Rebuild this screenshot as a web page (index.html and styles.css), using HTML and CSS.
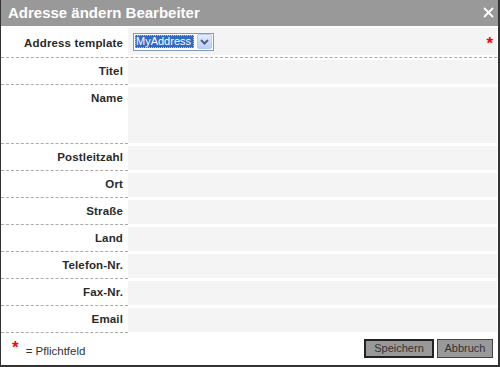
FILE: index.html
```html
<!DOCTYPE html>
<html lang="de">
<head>
  <meta charset="UTF-8">
  <title>Adresse ändern Bearbeiter</title>
  <link rel="stylesheet" href="styles.css">
</head>
<body>

  <div class="dialog">
    <!-- TITEL -->
    <div class="titlebar">
      <span class="title">Adresse ändern Bearbeiter</span>
      <span class="close">
        <svg width="11" height="11" viewBox="0 0 11 11"><path d="M1 1L10 10M10 1L1 10" stroke="#fff" stroke-width="1.8"/></svg>
      </span>
    </div>

    <!-- FORMULAR -->
    <div class="form">
      <div class="row row-first">
        <div class="row-label">Address template</div>
        <div class="row-value">
          <span class="select">
            <span class="select-text">MyAddress</span>
            <span class="select-btn">
              <svg width="9" height="6" viewBox="0 0 9 6"><path d="M1 1L4.5 4.5L8 1" fill="none" stroke="#4d6185" stroke-width="2"/></svg>
            </span>
          </span>
          <span class="req">*</span>
        </div>
      </div>
      <div class="row">
        <div class="row-label">Titel</div>
        <div class="row-value"></div>
      </div>
      <div class="row row-tall">
        <div class="row-label">Name</div>
        <div class="row-value"></div>
      </div>
      <div class="row">
        <div class="row-label">Postleitzahl</div>
        <div class="row-value"></div>
      </div>
      <div class="row">
        <div class="row-label">Ort</div>
        <div class="row-value"></div>
      </div>
      <div class="row">
        <div class="row-label">Straße</div>
        <div class="row-value"></div>
      </div>
      <div class="row">
        <div class="row-label">Land</div>
        <div class="row-value"></div>
      </div>
      <div class="row">
        <div class="row-label">Telefon-Nr.</div>
        <div class="row-value"></div>
      </div>
      <div class="row">
        <div class="row-label">Fax-Nr.</div>
        <div class="row-value"></div>
      </div>
      <div class="row">
        <div class="row-label">Email</div>
        <div class="row-value"></div>
      </div>
    </div>

    <!-- FUSS -->
    <div class="footer">
      <div class="legend"><span class="req">*</span> = Pflichtfeld</div>
      <div class="buttons">
        <button class="btn btn-default">Speichern</button>
        <button class="btn">Abbruch</button>
      </div>
    </div>
  </div>

</body>
</html>
```

FILE: styles.css
```css
* {box-sizing:border-box; margin:0; padding:0;}
body {
  font-family:'Liberation Sans',Arial,sans-serif;
  font-size:11px; color:#333; background:#fff;
}

.dialog {
  width:500px; height:367px;
  display:flex; flex-direction:column;
  border-left:1px solid #333; border-right:2px solid #333; border-bottom:2px solid #333;
}

.titlebar {
  height:26px; background:#999;
  display:flex; align-items:center; justify-content:space-between;
  padding:0 4px 0 7px;
}
.title {color:#fff; font-weight:bold; font-size:15px; line-height:26px;}
.close {display:flex; width:11px; height:11px; margin-top:-1px;}

.form {padding-right:1px;}
.row {display:flex;}
.row-label {
  width:127px; height:27px; flex:none;
  padding:7px 5px 0 0; text-align:right;
  font-weight:bold; font-size:11.5px; line-height:13px; letter-spacing:.15px;
  color:#2a2a2a;
  border-bottom:1px dashed #aaa;
}
.row-value {flex:1; background:#f4f4f4; margin:2px 0 1px;}
.row-tall .row-label {height:59px;}

.row-first {padding:2px 0; border-bottom:1px dashed #aaa;}
.row-first .row-label {height:27px; border-bottom:none; padding-top:9px;}
.row-first .row-value {
  margin:0; height:27px;
  display:flex; align-items:center; justify-content:space-between;
  padding:0 4px 0 5px;
}

.select {
  display:flex; align-items:center; gap:3px;
  width:81px; height:18px; padding:0 1px;
  background:#fff; border:1px solid #7f9db9;
}
.select-text {
  width:60px; height:13px; line-height:13px; padding-left:1px;
  background:#316ac5; color:#fff;
  outline:1px dotted #e8c060; outline-offset:-1px;
}
.select-btn {
  width:15px; height:15px;
  display:flex; align-items:center; justify-content:center;
  border:1px solid #b9cbf3; border-radius:2px;
  background:linear-gradient(#e4ecfd,#bccff8);
}

.req {color:#f00; font-weight:bold; font-size:17px; line-height:11px; height:11px;}
.row-first .req {margin-top:4px;}

.footer {
  flex:1; display:flex; align-items:center; justify-content:space-between;
  padding:0 5px 1px 11px;
}
.legend {display:flex; align-items:flex-start; gap:7px; margin-top:4px; font-size:11.5px;}
.legend .req {margin-top:-3px;}
.buttons {display:flex; gap:3px;}
.btn {
  font-family:'Liberation Sans',Arial,sans-serif; font-size:11px; color:#333;
  background:#999; border:1px solid #444;
  height:19px; width:56px; line-height:15px;
}
.btn-default {width:70px; border:2px solid #222;}
```
